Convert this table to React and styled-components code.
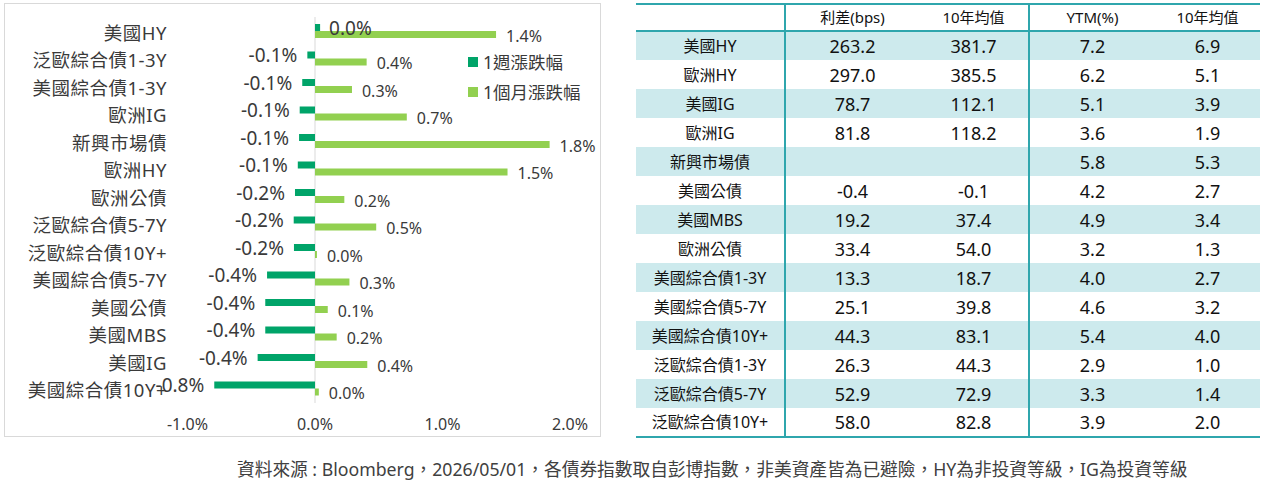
import styled, { createGlobalStyle } from 'styled-components';

const FONT = `"Noto Sans", "Noto Sans CJK TC", sans-serif`;

const DARK = '#00a469';
const LIGHT = '#92d050';
const TEAL = '#2fa6ad';
const BAND = '#cdeaed';

// page-coordinate chart geometry
const ZERO_X = 315;
const PX_PER_PCT = 127.5;
const FIRST_ROW = 31;
const ROW_STEP = 27.5;
const BAR_H = 7;

const chartData = [
  ['美國HY', 0.04, 1.42, '0.0%', '1.4%'],
  ['泛歐綜合債1-3Y', -0.06, 0.405, '-0.1%', '0.4%'],
  ['美國綜合債1-3Y', -0.1, 0.29, '-0.1%', '0.3%'],
  ['歐洲IG', -0.12, 0.72, '-0.1%', '0.7%'],
  ['新興市場債', -0.125, 1.84, '-0.1%', '1.8%'],
  ['歐洲HY', -0.135, 1.51, '-0.1%', '1.5%'],
  ['歐洲公債', -0.157, 0.23, '-0.2%', '0.2%'],
  ['泛歐綜合債5-7Y', -0.167, 0.48, '-0.2%', '0.5%'],
  ['泛歐綜合債10Y+', -0.165, 0.015, '-0.2%', '0.0%'],
  ['美國綜合債5-7Y', -0.376, 0.27, '-0.4%', '0.3%'],
  ['美國公債', -0.39, 0.1, '-0.4%', '0.1%'],
  ['美國MBS', -0.39, 0.17, '-0.4%', '0.2%'],
  ['美國IG', -0.45, 0.41, '-0.4%', '0.4%'],
  ['美國綜合債10Y+', -0.79, 0.03, '-0.8%', '0.0%'],
];

const tableRows = [
  ['美國HY', '263.2', '381.7', '7.2', '6.9'],
  ['歐洲HY', '297.0', '385.5', '6.2', '5.1'],
  ['美國IG', '78.7', '112.1', '5.1', '3.9'],
  ['歐洲IG', '81.8', '118.2', '3.6', '1.9'],
  ['新興市場債', '', '', '5.8', '5.3'],
  ['美國公債', '-0.4', '-0.1', '4.2', '2.7'],
  ['美國MBS', '19.2', '37.4', '4.9', '3.4'],
  ['歐洲公債', '33.4', '54.0', '3.2', '1.3'],
  ['美國綜合債1-3Y', '13.3', '18.7', '4.0', '2.7'],
  ['美國綜合債5-7Y', '25.1', '39.8', '4.6', '3.2'],
  ['美國綜合債10Y+', '44.3', '83.1', '5.4', '4.0'],
  ['泛歐綜合債1-3Y', '26.3', '44.3', '2.9', '1.0'],
  ['泛歐綜合債5-7Y', '52.9', '72.9', '3.3', '1.4'],
  ['泛歐綜合債10Y+', '58.0', '82.8', '3.9', '2.0'],
];

const GlobalStyle = createGlobalStyle`
  body {
    margin: 0;
    background: #fff;
    font-family: ${FONT};
  }
`;

const Page = styled.div`
  width: 1263px;
  height: 483px;
  padding: 3px 0 0 4px;
  box-sizing: border-box;
  display: flex;
  flex-direction: column;
`;

const TopRow = styled.div`
  display: flex;
  align-items: flex-start;
  gap: 35px;
`;

const ChartBox = styled.div`
  width: 597px;
  height: 434px;
  box-sizing: border-box;
  border: 1px solid #d9d9d9;
  overflow: hidden;
`;

const ChartSvg = styled.svg`
  display: block;
  font-family: ${FONT};

  text {
    fill: #3a3a3a;
  }
  .cat {
    font-size: 18.5px;
    letter-spacing: 0.5px;
  }
  .dark-val {
    font-size: 19px;
  }
  .light-val {
    font-size: 16px;
  }
  .axis {
    font-size: 16px;
  }
  .legend {
    font-size: 17.5px;
  }
`;

const Table = styled.table`
  width: 624px;
  border-collapse: collapse;
  table-layout: fixed;
  color: #111;
  border-top: 2px solid ${TEAL};
  border-bottom: 2px solid ${TEAL};

  col.c1 { width: 149px; }
  col.c2 { width: 134px; }
  col.c3 { width: 110px; }
  col.c4 { width: 126px; }
  col.c5 { width: 105px; }
`;

const HeadRow = styled.tr`
  height: 27px;
  border-bottom: 2px solid ${TEAL};
`;

const BodyRow = styled.tr`
  height: 29px;
  background: ${p => (p.$band ? BAND : '#fff')};
`;

const Cell = styled.td`
  padding: 0;
  text-align: center;
  vertical-align: middle;
  line-height: 1;
  font-weight: 400;
  font-size: ${p => (p.$label ? '16px' : p.$head ? '15px' : '18px')};
  border-right: ${p => (p.$divider ? `2px solid ${TEAL}` : 'none')};
`;

const Footer = styled.div`
  margin-top: 18px;
  padding-left: 233px;
  font-size: 17.7px;
  line-height: 26px;
  color: #404040;
  white-space: nowrap;
`;

const x = v => ZERO_X + v * PX_PER_PCT;

const BarChart = () => (
  <ChartSvg width="595" height="432" viewBox="0 0 595 432">
    <g transform="translate(-5,-4)">
      <line x1={ZERO_X} y1={17} x2={ZERO_X} y2={403} stroke="#d9d9d9" strokeWidth="1" />
      {chartData.map(([name, week, month, weekTxt, monthTxt], i) => {
        const cy = FIRST_ROW + i * ROW_STEP;
        const wx = x(week);
        const mx = x(month);
        return (
          <g key={name}>
            <text className="cat" x={167} y={cy + 1} textAnchor="end" dominantBaseline="central">
              {name}
            </text>
            <rect
              x={Math.min(wx, ZERO_X)}
              y={cy - BAR_H}
              width={Math.abs(wx - ZERO_X)}
              height={BAR_H}
              fill={DARK}
            />
            <rect x={ZERO_X} y={cy} width={Math.max(mx - ZERO_X, 1.5)} height={BAR_H} fill={LIGHT} />
            <text
              className="dark-val"
              x={week < 0 ? wx - 10 : wx + 9}
              y={cy - BAR_H / 2}
              textAnchor={week < 0 ? 'end' : 'start'}
              dominantBaseline="central"
            >
              {weekTxt}
            </text>
            <text
              className="light-val"
              x={Math.max(mx, ZERO_X + 1.5) + 10}
              y={cy + BAR_H / 2 + 1}
              dominantBaseline="central"
            >
              {monthTxt}
            </text>
          </g>
        );
      })}
      {[
        [-1, '-1.0%'],
        [0, '0.0%'],
        [1, '1.0%'],
        [2, '2.0%'],
      ].map(([v, t]) => (
        <text key={t} className="axis" x={x(v)} y={424} textAnchor="middle" dominantBaseline="central">
          {t}
        </text>
      ))}
      <rect x={468} y={57} width={10} height={10} fill={DARK} />
      <text className="legend" x={483} y={62} dominantBaseline="central">
        1週漲跌幅
      </text>
      <rect x={468} y={87} width={10} height={10} fill={LIGHT} />
      <text className="legend" x={483} y={92} dominantBaseline="central">
        1個月漲跌幅
      </text>
    </g>
  </ChartSvg>
);

const SpreadTable = () => (
  <Table>
    <colgroup>
      <col className="c1" />
      <col className="c2" />
      <col className="c3" />
      <col className="c4" />
      <col className="c5" />
    </colgroup>
    <thead>
      <HeadRow>
        <Cell as="th" $head $divider />
        <Cell as="th" $head>利差(bps)</Cell>
        <Cell as="th" $head $divider>10年均值</Cell>
        <Cell as="th" $head>YTM(%)</Cell>
        <Cell as="th" $head>10年均值</Cell>
      </HeadRow>
    </thead>
    <tbody>
      {tableRows.map(([name, spread, spreadAvg, ytm, ytmAvg], i) => (
        <BodyRow key={name} $band={i % 2 === 0}>
          <Cell $label $divider>{name}</Cell>
          <Cell>{spread}</Cell>
          <Cell $divider>{spreadAvg}</Cell>
          <Cell>{ytm}</Cell>
          <Cell>{ytmAvg}</Cell>
        </BodyRow>
      ))}
    </tbody>
  </Table>
);

export default function App() {
  return (
    <>
      <GlobalStyle />
      <Page>
        <TopRow>
          <ChartBox>
            <BarChart />
          </ChartBox>
          <SpreadTable />
        </TopRow>
        <Footer>
          資料來源 : Bloomberg，2026/05/01，各債券指數取自彭博指數，非美資產皆為已避險，HY為非投資等級，IG為投資等級
        </Footer>
      </Page>
    </>
  );
}
